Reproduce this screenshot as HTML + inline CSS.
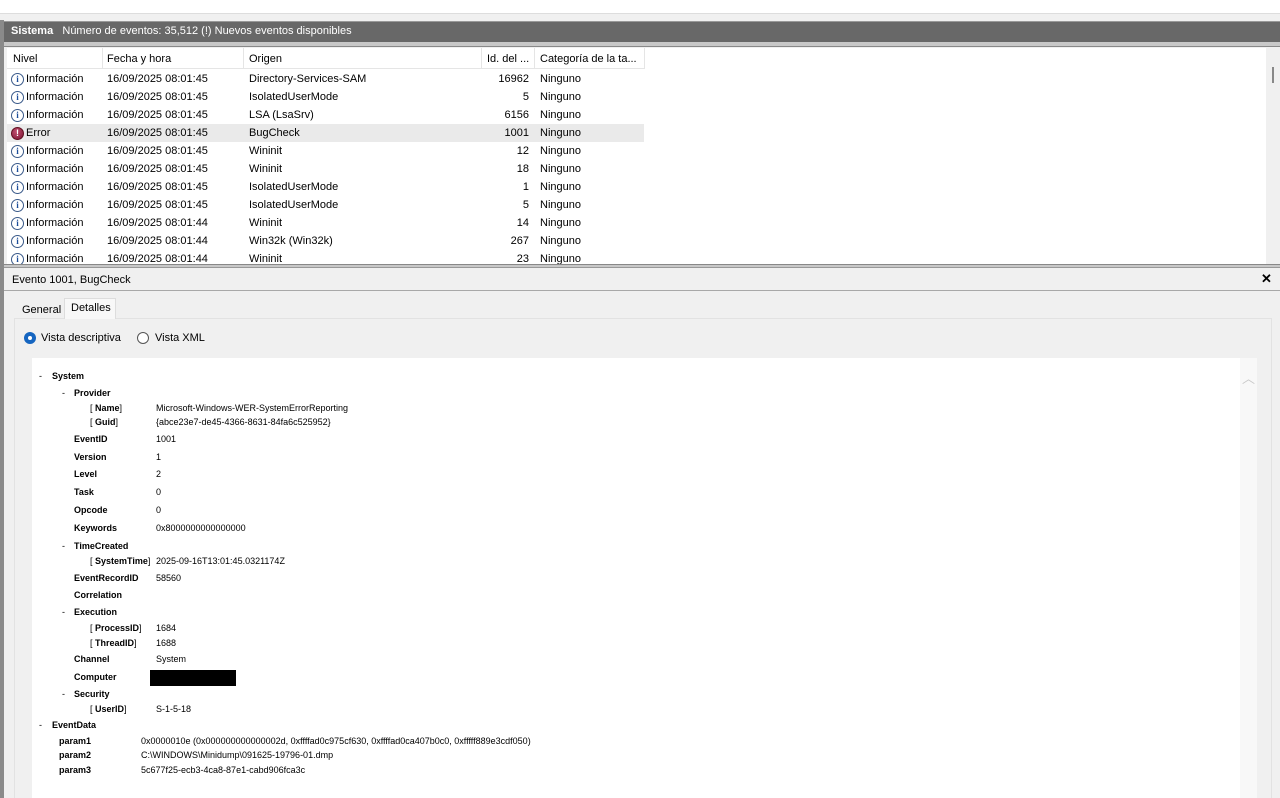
<!DOCTYPE html>
<html><head><meta charset="utf-8"><style>
*{margin:0;padding:0;box-sizing:border-box}
body{width:1280px;height:798px;position:relative;overflow:hidden;background:#f0f0f0;font-family:"Liberation Sans",sans-serif;color:#000}
.a{position:absolute;white-space:nowrap}
.t{font-size:11px}
.r{font-size:11px;height:18px;line-height:18px;display:flex;align-items:center}
.d{font-size:9px;line-height:12px}
.b{font-weight:bold}
.ic{display:inline-block;width:13px;height:13px;border-radius:50%;border:1px solid #3a5a8a;background:#fff;font:bold 9px/11px "Liberation Serif",serif;color:#1d4e9a;text-align:center;margin-right:2px;flex:none}
.er{background:radial-gradient(circle at 40% 35%,#c05070,#7a1030);border-color:#601020;color:#fff;font-family:"Liberation Sans";}
</style></head><body>
<div class="a" style="left:0;top:0;width:1280px;height:14px;background:#fff;border-bottom:1px solid #ddd"></div>
<div class="a" style="left:0;top:14px;width:1280px;height:784px;background:#f0f0f0"></div>
<div class="a" style="left:0;top:20px;width:4px;height:778px;background:#8a8a8a"></div>
<div class="a" style="left:4px;top:21px;width:1276px;height:21px;background:#686868;border-top:1px solid #999"></div>
<div class="a t" style="left:11px;top:25px;color:#fff"><b>Sistema</b>&nbsp;&nbsp;&nbsp;Número de eventos: 35,512 (!) Nuevos eventos disponibles</div>
<div class="a" style="left:4px;top:42px;width:1276px;height:5px;background:#c8c8c8;border-bottom:1px solid #888"></div>
<div class="a" style="left:7px;top:48px;width:1259px;height:216px;background:#fff;overflow:hidden">
 <div class="a" style="left:0;top:0;width:637px;height:21px;border-bottom:1px solid #e5e5e5"></div>
 <div class="a" style="left:95px;top:0;width:1px;height:21px;background:#e5e5e5"></div>
 <div class="a" style="left:236px;top:0;width:1px;height:21px;background:#e5e5e5"></div>
 <div class="a" style="left:474px;top:0;width:1px;height:21px;background:#e5e5e5"></div>
 <div class="a" style="left:527px;top:0;width:1px;height:21px;background:#e5e5e5"></div>
 <div class="a" style="left:637px;top:0;width:1px;height:21px;background:#e5e5e5"></div>
 <div class="a t" style="left:6px;top:5px">Nivel</div>
 <div class="a t" style="left:100px;top:5px">Fecha y hora</div>
 <div class="a t" style="left:242px;top:5px">Origen</div>
 <div class="a t" style="left:480px;top:5px">Id. del ...</div>
 <div class="a t" style="left:533px;top:5px">Categoría de la ta...</div>
 <div class="a" style="left:0;top:76px;width:637px;height:18px;background:#eaeaea"></div>
</div>
<div id="rows"></div>
<div class="a" style="left:1266px;top:48px;width:14px;height:216px;background:#f0f0f0"></div>
<div class="a" style="left:1272px;top:67px;width:2px;height:16px;background:#888"></div>
<div class="a" style="left:4px;top:264px;width:1276px;height:4px;background:#c8c8c8;border-top:1px solid #888;border-bottom:1px solid #999"></div>
<div class="a t" style="left:12px;top:274px">Evento 1001, BugCheck</div>
<div class="a" style="left:1261px;top:271px;font:bold 13px 'Liberation Sans'">✕</div>
<div class="a" style="left:4px;top:290px;width:1276px;height:1px;background:#a8a8a8"></div>
<div class="a" style="left:14px;top:318px;width:1258px;height:480px;background:#f0f0f0;border:1px solid #e2e2e2;border-bottom:none"></div>
<div class="a t" style="left:22px;top:304px">General</div>
<div class="a" style="left:64px;top:298px;width:52px;height:21px;background:#f8f8f8;border:1px solid #ddd;border-bottom:none"></div>
<div class="a t" style="left:71px;top:302px">Detalles</div>
<div class="a" style="left:24px;top:332px;width:12px;height:12px;border-radius:50%;background:#1565c0"></div>
<div class="a" style="left:28px;top:336px;width:4px;height:4px;border-radius:50%;background:#fff"></div>
<div class="a t" style="left:41px;top:332px">Vista descriptiva</div>
<div class="a" style="left:137px;top:332px;width:12px;height:12px;border-radius:50%;border:1px solid #555;background:#fff"></div>
<div class="a t" style="left:155px;top:332px">Vista XML</div>
<div class="a" style="left:32px;top:358px;width:1208px;height:440px;background:#fff"></div>
<div class="a" style="left:1240px;top:358px;width:17px;height:440px;background:#f8f8f8"></div>
<div class="a" style="left:1242px;top:368px;color:#c8c8c8;font-size:13px">︿</div>
<div id="det"></div>
<div class="a" style="left:150px;top:670px;width:86px;height:16px;background:#000"></div>
<script>
var R=[["i","Información","Directory-Services-SAM","16962"],["i","Información","IsolatedUserMode","5"],["i","Información","LSA (LsaSrv)","6156"],["e","Error","BugCheck","1001"],["i","Información","Wininit","12"],["i","Información","Wininit","18"],["i","Información","IsolatedUserMode","1"],["i","Información","IsolatedUserMode","5"],["i","Información","Wininit","14"],["i","Información","Win32k (Win32k)","267"],["i","Información","Wininit","23"]];
var h="";R.forEach(function(r,k){var y=70+k*18,t=k<8?"45":"44";
h+='<div class="a r" style="left:11px;top:'+y+'px"><span class="ic'+(r[0]=="e"?" er":"")+'">'+(r[0]=="e"?"!":"i")+'</span>'+r[1]+'</div>';
h+='<div class="a r" style="left:107px;top:'+y+'px">16/09/2025 08:01:'+t+'</div>';
h+='<div class="a r" style="left:249px;top:'+y+'px">'+r[2]+'</div>';
h+='<div class="a r" style="left:480px;width:49px;justify-content:flex-end;top:'+y+'px">'+r[3]+'</div>';
h+='<div class="a r" style="left:540px;top:'+y+'px">Ninguno</div>';});
h+='<div class="a" style="left:7px;top:264px;width:1259px;height:4px;background:#c8c8c8"></div>';
document.getElementById("rows").innerHTML=h;
var D=[[376,39,"-",52,"System",0,""],[393,62,"-",74,"Provider",0,""],[408,90,"[ <b>Name</b>]",0,"",156,"Microsoft-Windows-WER-SystemErrorReporting"],[422,90,"[ <b>Guid</b>]",0,"",156,"{abce23e7-de45-4366-8631-84fa6c525952}"],[439,0,"",74,"EventID",156,"1001"],[457,0,"",74,"Version",156,"1"],[474,0,"",74,"Level",156,"2"],[492,0,"",74,"Task",156,"0"],[510,0,"",74,"Opcode",156,"0"],[528,0,"",74,"Keywords",156,"0x8000000000000000"],[546,62,"-",74,"TimeCreated",0,""],[561,90,"[ <b>SystemTime</b>]",0,"",156,"2025-09-16T13:01:45.0321174Z"],[578,0,"",74,"EventRecordID",156,"58560"],[595,0,"",74,"Correlation",0,""],[612,62,"-",74,"Execution",0,""],[628,90,"[ <b>ProcessID</b>]",0,"",156,"1684"],[643,90,"[ <b>ThreadID</b>]",0,"",156,"1688"],[659,0,"",74,"Channel",156,"System"],[677,0,"",74,"Computer",0,""],[694,62,"-",74,"Security",0,""],[709,90,"[ <b>UserID</b>]",0,"",156,"S-1-5-18"],[725,39,"-",52,"EventData",0,""],[741,0,"",59,"param1",141,"0x0000010e (0x000000000000002d, 0xffffad0c975cf630, 0xffffad0ca407b0c0, 0xfffff889e3cdf050)"],[755,0,"",59,"param2",141,"C:\\WINDOWS\\Minidump\\091625-19796-01.dmp"],[770,0,"",59,"param3",141,"5c677f25-ecb3-4ca8-87e1-cabd906fca3c"]];
h="";D.forEach(function(d){var y=d[0]-6;
if(d[1])h+='<div class="a d" style="left:'+d[1]+'px;top:'+y+'px">'+d[2]+'</div>';
if(d[3])h+='<div class="a d b" style="left:'+d[3]+'px;top:'+y+'px">'+d[4]+'</div>';
if(d[5])h+='<div class="a d" style="left:'+d[5]+'px;top:'+y+'px">'+d[6]+'</div>';});
document.getElementById("det").innerHTML=h;
</script>
</body></html>
